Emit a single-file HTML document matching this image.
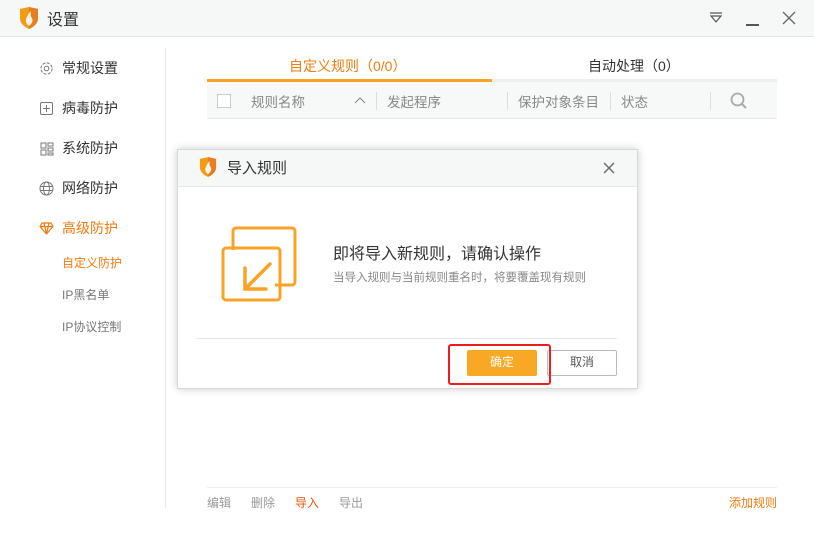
<!DOCTYPE html>
<html><head><meta charset="utf-8"><style>
*{margin:0;padding:0;box-sizing:border-box}
body{width:814px;height:533px;background:#fff;font-family:"Liberation Sans","Noto Sans CJK SC",sans-serif;position:relative;overflow:hidden;color:#333}
.a{position:absolute;white-space:nowrap}
</style></head><body>
<div class="a" style="left:0;top:0;width:814px;height:37px;background:#f6f7f7;border-bottom:1px solid #e6e6e6"></div>
<svg class="a" style="left:19px;top:7px" width="20" height="22" viewBox="0 0 20 22"><path d="M1 2 L10 0 L19 2 L19 11 Q19 18 10 22 Q1 18 1 11Z" fill="#f39c12"/><path d="M10 0 L19 2 L19 11 Q19 18 10 22Z" fill="#e67e22"/><path d="M10 19 Q5 15 8 10 Q9 7 12 4 Q11 9 13 11 Q15 15 10 19Z" fill="#fff" opacity=".9"/></svg>
<div class="a" style="left:47px;top:6px;font-size:16px;color:#333">设置</div>
<svg class="a" style="left:708px;top:11px" width="16" height="14"><path d="M2 2H14M3 5H13L8 11Z" stroke="#555" fill="none" stroke-width="1.2"/></svg>
<div class="a" style="left:746px;top:24px;width:13px;height:1.5px;background:#555"></div>
<svg class="a" style="left:782px;top:11px" width="14" height="14"><path d="M1 1L13 13M13 1L1 13" stroke="#666" stroke-width="1.3"/></svg>

<div class="a" style="left:165px;top:48px;width:1px;height:460px;background:#e8e8e8"></div>
<svg class="a" style="left:39px;top:61px" width="15" height="15" viewBox="0 0 15 15"><circle cx="7.5" cy="7.5" r="2.3" fill="none" stroke="#777"/><circle cx="7.5" cy="7.5" r="5.6" fill="none" stroke="#777" stroke-dasharray="3 1.4"/></svg>
<div class="a" style="left:62px;top:58px;font-size:14px;color:#333">常规设置</div>
<div class="a" style="left:40px;top:102px;width:13px;height:13px;border:1px solid #777;border-radius:2px"></div>
<div class="a" style="left:43px;top:108px;width:7px;height:1px;background:#777"></div><div class="a" style="left:46px;top:105px;width:1px;height:7px;background:#777"></div>
<div class="a" style="left:62px;top:98px;font-size:14px;color:#333">病毒防护</div>
<svg class="a" style="left:40px;top:142px" width="14" height="14"><path d="M1 1h5v5h-5zM8 1h5v3h-5zM1 8h5v5h-5zM8 6h5v3h-5zM8 11h5v2h-5z" fill="none" stroke="#777"/></svg>
<div class="a" style="left:62px;top:138px;font-size:14px;color:#333">系统防护</div>
<svg class="a" style="left:39px;top:181px" width="15" height="15"><circle cx="7.5" cy="7.5" r="6.5" fill="none" stroke="#777"/><ellipse cx="7.5" cy="7.5" rx="3" ry="6.5" fill="none" stroke="#777"/><path d="M1 5.5H14M1 9.5H14" stroke="#777"/></svg>
<div class="a" style="left:62px;top:178px;font-size:14px;color:#333">网络防护</div>
<svg class="a" style="left:39px;top:222px" width="15" height="13"><path d="M3 1H12L14 4.5L7.5 12L1 4.5Z M1 4.5H14 M5 1L7.5 12L10 1" fill="none" stroke="#f07c0f" stroke-width="1.2"/></svg>
<div class="a" style="left:62px;top:218px;font-size:14px;color:#f07c0f">高级防护</div>
<div class="a" style="left:62px;top:254px;font-size:12px;color:#f07c0f">自定义防护</div>
<div class="a" style="left:62px;top:286px;font-size:12px;color:#777">IP黑名单</div>
<div class="a" style="left:62px;top:318px;font-size:12px;color:#777">IP协议控制</div>

<div class="a" style="left:289px;top:56px;font-size:14px;color:#f07c0f">自定义规则（0/0）</div>
<div class="a" style="left:588px;top:56px;font-size:14px;color:#333">自动处理（0）</div>
<div class="a" style="left:207px;top:79px;width:285px;height:3px;background:#f9a325"></div>
<div class="a" style="left:492px;top:79px;width:285px;height:3px;background:#eee"></div>
<div class="a" style="left:207px;top:82px;width:570px;height:37px;background:#f7f8f8;border-bottom:1px solid #e8e8e8"></div>
<div class="a" style="left:217px;top:94px;width:14px;height:14px;border:1px solid #ccc;background:#fff"></div>
<div class="a" style="left:251px;top:91px;font-size:13.5px;color:#888">规则名称</div>
<svg class="a" style="left:354px;top:96px" width="12" height="8"><path d="M1 7L6 2L11 7" stroke="#888" fill="none"/></svg>
<div class="a" style="left:376px;top:92px;width:1px;height:18px;background:#ddd"></div>
<div class="a" style="left:387px;top:91px;font-size:13.5px;color:#888">发起程序</div>
<div class="a" style="left:507px;top:92px;width:1px;height:18px;background:#ddd"></div>
<div class="a" style="left:518px;top:91px;font-size:13.5px;color:#888">保护对象条目</div>
<div class="a" style="left:610px;top:92px;width:1px;height:18px;background:#ddd"></div>
<div class="a" style="left:621px;top:91px;font-size:13.5px;color:#888">状态</div>
<div class="a" style="left:710px;top:92px;width:1px;height:18px;background:#ddd"></div>
<svg class="a" style="left:730px;top:92px" width="18" height="18"><circle cx="7.5" cy="7.5" r="6" fill="none" stroke="#aaa" stroke-width="1.8"/><path d="M12 12L16 16" stroke="#aaa" stroke-width="2"/></svg>

<div class="a" style="left:207px;top:487px;width:570px;height:1px;background:#eee"></div>
<div class="a" style="left:207px;top:494px;font-size:12px;color:#999">编辑</div>
<div class="a" style="left:251px;top:494px;font-size:12px;color:#999">删除</div>
<div class="a" style="left:295px;top:494px;font-size:12px;color:#e8580c">导入</div>
<div class="a" style="left:339px;top:494px;font-size:12px;color:#999">导出</div>
<div class="a" style="left:729px;top:494px;font-size:12px;color:#f07c0f">添加规则</div>

<div class="a" style="left:177px;top:149px;width:461px;height:240px;background:#fff;border:1px solid #d8d8d8;box-shadow:0 0 8px rgba(0,0,0,.2)"></div>
<div class="a" style="left:178px;top:150px;width:459px;height:37px;background:#f6f7f7;border-bottom:1px solid #e8e8e8"></div>
<svg class="a" style="left:199px;top:157px" width="18" height="20" viewBox="0 0 20 22"><path d="M1 2 L10 0 L19 2 L19 11 Q19 18 10 22 Q1 18 1 11Z" fill="#f39c12"/><path d="M10 0 L19 2 L19 11 Q19 18 10 22Z" fill="#e67e22"/><path d="M10 19 Q5 15 8 10 Q9 7 12 4 Q11 9 13 11 Q15 15 10 19Z" fill="#fff" opacity=".9"/></svg>
<div class="a" style="left:227px;top:157px;font-size:15px;color:#333">导入规则</div>
<svg class="a" style="left:603px;top:162px" width="12" height="12"><path d="M1 1L11 11M11 1L1 11" stroke="#666" stroke-width="1.3"/></svg>
<svg class="a" style="left:221px;top:226px" width="76" height="76"><path d="M12 24V5a3 3 0 0 1 3-3h56a3 3 0 0 1 3 3v51a3 3 0 0 1-3 3H54" fill="none" stroke="#f9a325" stroke-width="3"/><rect x="2" y="22" width="57" height="52" rx="3" fill="none" stroke="#f9a325" stroke-width="3"/><path d="M49 38L24 63M24 42V63H45" fill="none" stroke="#f9a325" stroke-width="3.5" stroke-linecap="round"/></svg>
<div class="a" style="left:333px;top:240px;font-size:16px;color:#333">即将导入新规则，请确认操作</div>
<div class="a" style="left:333px;top:269px;font-size:11.5px;color:#888">当导入规则与当前规则重名时，将要覆盖现有规则</div>
<div class="a" style="left:196px;top:338px;width:421px;height:1px;background:#e8e8e8"></div>
<div class="a" style="left:467px;top:350px;width:70px;height:26px;background:#f9a825;border-radius:2px;color:#fff;font-size:12px;text-align:center;line-height:25px">确定</div>
<div class="a" style="left:547px;top:350px;width:70px;height:26px;border:1px solid #bbb;border-radius:2px;color:#555;font-size:12px;text-align:center;line-height:23px">取消</div>
<div class="a" style="left:448px;top:344px;width:103px;height:41px;border:2.5px solid #ee1c1c;border-radius:3px"></div>
</body></html>
